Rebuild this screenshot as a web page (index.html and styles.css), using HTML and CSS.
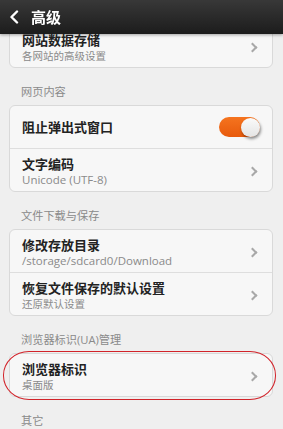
FILE: index.html
```html
<!DOCTYPE html>
<html lang="zh-CN">
<head>
	<meta charset="UTF-8">
	<meta name="viewport" content="width=device-width, initial-scale=1.0">
	<title>高级</title>
	<link rel="stylesheet" href="styles.css">
</head>
<body>
	<!-- 상단 타이틀바 : 스크롤된 내용 위에 겹쳐진다 -->
	<header class="topbar">
		<svg class="back" width="10" height="14" viewBox="0 0 10 14">
			<path d="M8 1.5 L2.5 7 L8 12.5" fill="none" stroke="#fff" stroke-width="2.4" stroke-linecap="round" stroke-linejoin="round"/>
		</svg>
		<span class="topbar-title">高级</span>
	</header>

	<main class="content">
		<div class="card">
			<div class="row">
				<div class="row-text">
					<div class="row-title">网站数据存储</div>
					<div class="row-sub">各网站的高级设置</div>
				</div>
				<span class="arrow"></span>
			</div>
		</div>

		<div class="section">网页内容</div>
		<div class="card">
			<div class="row row-single">
				<div class="row-text">
					<div class="row-title">阻止弹出式窗口</div>
				</div>
				<span class="switch on"><span class="knob"></span></span>
			</div>
			<div class="row">
				<div class="row-text">
					<div class="row-title">文字编码</div>
					<div class="row-sub latin">Unicode (UTF-8)</div>
				</div>
				<span class="arrow"></span>
			</div>
		</div>

		<div class="section">文件下载与保存</div>
		<div class="card">
			<div class="row">
				<div class="row-text">
					<div class="row-title">修改存放目录</div>
					<div class="row-sub latin">/storage/sdcard0/Download</div>
				</div>
				<span class="arrow"></span>
			</div>
			<div class="row">
				<div class="row-text">
					<div class="row-title">恢复文件保存的默认设置</div>
					<div class="row-sub">还原默认设置</div>
				</div>
				<span class="arrow"></span>
			</div>
		</div>

		<div class="section">浏览器标识(UA)管理</div>
		<div class="card marked">
			<div class="row">
				<div class="row-text">
					<div class="row-title">浏览器标识</div>
					<div class="row-sub">桌面版</div>
				</div>
				<span class="arrow"></span>
			</div>
		</div>

		<div class="section">其它</div>
	</main>
</body>
</html>
```

FILE: styles.css
```css
body {
	margin: 0;
	background-color: #efefef;
	font-family: "Open Sans", "Noto Sans CJK SC", sans-serif;
	overflow: hidden;
}
.topbar {
	position: fixed; top: 0; left: 0; right: 0; z-index: 10;
	height: 34px; display: flex; align-items: center;
	background: linear-gradient(#383838, #1c1c1c);
	box-shadow: 0 1px 3px rgba(0, 0, 0, 0.35);
}
.topbar .back {
	margin-left: 9px; margin-right: 12px;
}
.topbar-title {
	color: #fff; font-size: 15px; font-weight: 700;
	line-height: 18px;
}
.content {
	padding-top: 24px;
}
.card {
	margin: 0 10px 0 9px;
	background-color: #f7f7f7;
	border: 1px solid #d9d9d9; border-radius: 6px;
}
/* 구분선 : 두번째 행부터 위쪽에 선 */
.row + .row {
	border-top: 1px solid #dedede;
	height: 43px;
}
.row {
	height: 42px; box-sizing: border-box;
	display: flex; align-items: flex-start;
	padding: 7px 12px 0 12px;
}
.row-single {
	align-items: center; padding-top: 0;
}
.row-text {
	flex: 1;
}
.row-title {
	font-size: 13px; line-height: 16px; font-weight: 700; color: #222;
}
.row-sub {
	margin-top: 1px;
	font-size: 10.5px; line-height: 14px; color: #8a8a8a;
}
.row-sub.latin {
	font-size: 11.5px;
}
.arrow {
	width: 5px; height: 5px; margin: 12px 4px 0 0;
	border-top: 2px solid #a8a8a8; border-right: 2px solid #a8a8a8;
	transform: rotate(45deg);
}
.section {
	padding: 15px 0 5px 21px;
	font-size: 11.2px; line-height: 17px; color: #8a8a8a;
}
.switch {
	width: 41px; height: 20px; border-radius: 10px;
	display: flex; align-items: center; justify-content: flex-end;
	background: #ccc;
}
.switch.on {
	background: linear-gradient(#f5741f, #e85a0c);
}
.knob {
	width: 19px; height: 19px; border-radius: 50%;
	background: linear-gradient(#fafafa, #e4e4e4);
	box-shadow: 1px 2px 3px rgba(0, 0, 0, 0.45);
}
/* 빨간 표시선 (스크린샷 위의 주석) */
.marked {
	position: relative;
}
.marked::after {
	content: "";
	position: absolute; top: -3px; bottom: -4px; left: -7px; right: -4px;
	border: 1.5px solid #d2232a; border-radius: 26px / 24px;
}
```
